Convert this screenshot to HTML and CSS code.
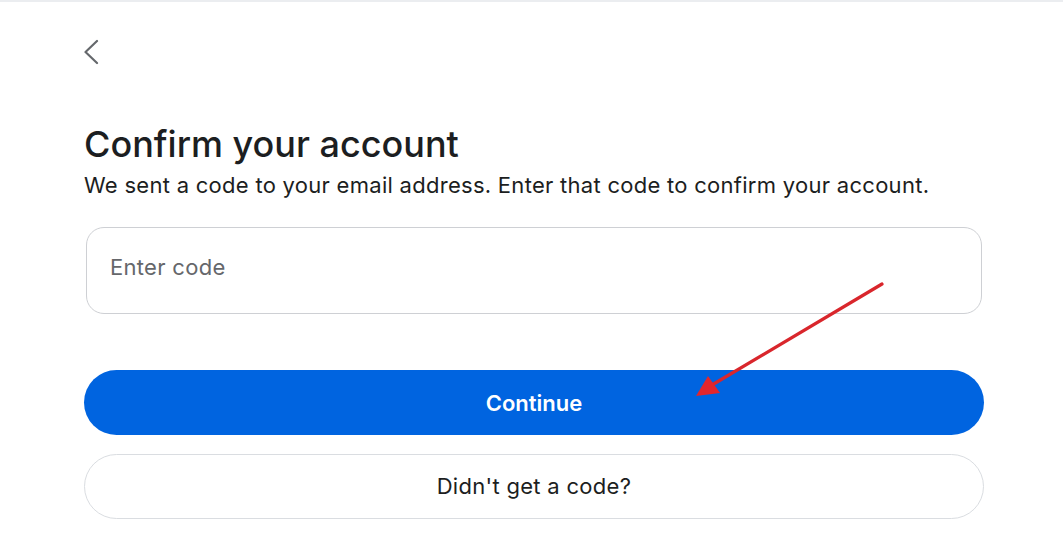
FILE: index.html
```html
<!DOCTYPE html>
<html lang="en">
<head>
    <meta charset="UTF-8">
    <meta name="viewport" content="width=device-width, initial-scale=1.0">
    <title>Confirm your account</title>
    <link rel="stylesheet" href="styles.css">
</head>
<body>
    <div class="page">
        <button class="back" aria-label="Back">
            <svg width="20" height="28" viewBox="0 0 20 28">
                <path d="M13 3 L1.5 14 L13 25" fill="none" stroke="#65686c" stroke-width="2.2" stroke-linecap="round" stroke-linejoin="round"/>
            </svg>
        </button>

        <h1 class="title">Confirm your account</h1>
        <p class="subtitle">We sent a code to your email address. Enter that code to confirm your account.</p>

        <div class="field">
            <input class="code" type="text" placeholder="Enter code">
        </div>

        <div class="actions">
            <button class="primary">Continue</button>
            <button class="secondary">Didn't get a code?</button>

            <!-- annotation arrow pointing at the continue button -->
            <svg class="arrow" width="1063" height="553" viewBox="0 0 1063 553">
                <line x1="882" y1="284" x2="712" y2="385" stroke="#d9262c" stroke-width="3.2" stroke-linecap="round"/>
                <polygon points="696,396 708,376 720,393" fill="#e3262c"/>
            </svg>
        </div>
    </div>
</body>
</html>
```

FILE: styles.css
```css
html, body {
    margin: 0;
    background: #fff;
    font-family: Inter, "Noto Sans", sans-serif;
    color: #1c1e21;
}

body {
    border-top: 2px solid #ebedf0;
    height: 551px;
    overflow: hidden;
    position: relative;
}

.page {
    width: 900px;
    padding: 36px 0 0 84px;
}

.back {
    display: block;
    border: none;
    background: none;
    padding: 0;
    margin: 0;
    height: 28px;
    cursor: pointer;
}

.title {
    margin: 56px 0 0 0;
    font-size: 36px;
    font-weight: 500;
    line-height: 44px;
}

.subtitle {
    margin: 3px 0 0 0;
    font-size: 22px;
    line-height: 32px;
    letter-spacing: 0.28px;
}

.field {
    margin-top: 26px;
    padding: 0 2px;
}

.code {
    box-sizing: border-box;
    width: 100%;
    height: 87px;
    border: 1px solid #ced0d4;
    border-radius: 18px;
    padding: 0 0 8px 23px;
    font-family: inherit;
    font-size: 22px;
    letter-spacing: 0.3px;
    color: #1c1e21;
    outline: none;
}

.code::placeholder {
    color: #65676b;
}

.actions {
    margin-top: 56px;
    display: flex;
    flex-direction: column;
    gap: 19px;
}

.primary, .secondary {
    height: 65px;
    border-radius: 33px;
    font-family: inherit;
    font-size: 22px;
    cursor: pointer;
}

.primary {
    border: none;
    background: #0064e0;
    color: #fff;
    font-weight: 600;
}

.secondary {
    border: 1px solid #dadde1;
    background: #fff;
    color: #1c1e21;
    font-weight: 400;
    letter-spacing: 0.3px;
    padding-bottom: 2px;
}

.arrow {
    position: absolute;
    left: 0;
    top: -2px;
    pointer-events: none;
}
```
